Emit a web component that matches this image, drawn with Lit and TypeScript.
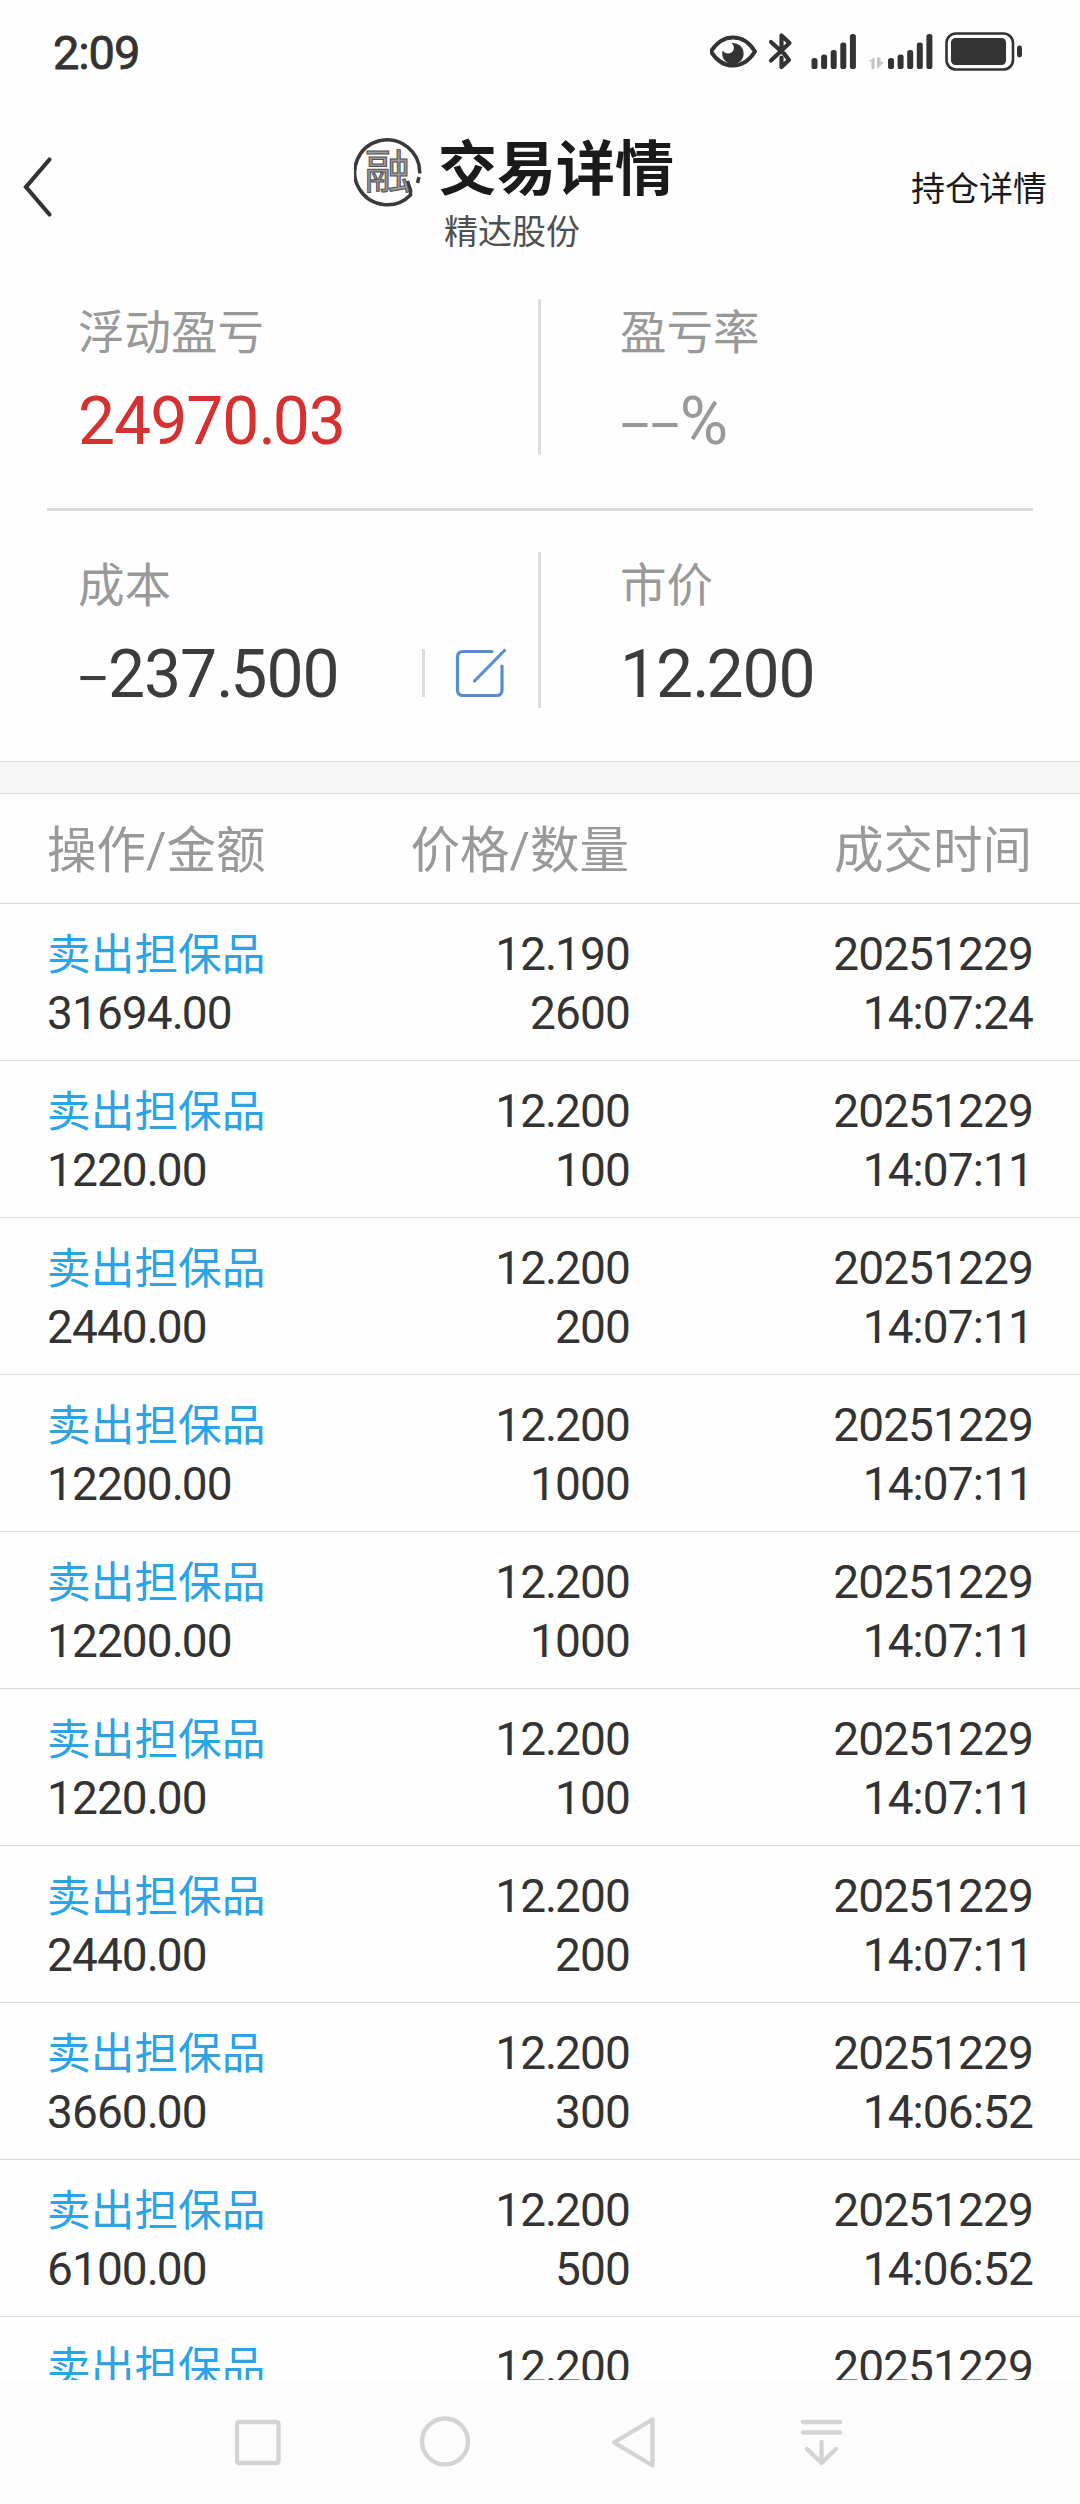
import { LitElement, html, css, svg } from "lit";
import { customElement } from "lit/decorators.js";

interface Trade {
  amount: string;
  price: string;
  qty: string;
  time: string;
}

const t = (amount: string, price: string, qty: string, time: string): Trade => ({ amount, price, qty, time });

const TRADES: Trade[] = [
  t("31694.00", "12.190", "2600", "14:07:24"),
  t("1220.00", "12.200", "100", "14:07:11"),
  t("2440.00", "12.200", "200", "14:07:11"),
  t("12200.00", "12.200", "1000", "14:07:11"),
  t("12200.00", "12.200", "1000", "14:07:11"),
  t("1220.00", "12.200", "100", "14:07:11"),
  t("2440.00", "12.200", "200", "14:07:11"),
  t("3660.00", "12.200", "300", "14:06:52"),
  t("6100.00", "12.200", "500", "14:06:52"),
  t("", "12.200", "", ""),
];

// Sets the decimal point slightly tighter than the digits.
const decimal = (value: string) => {
  const [whole, frac] = value.split(".");
  return frac === undefined ? value : html`${whole}<span class="point">.</span>${frac}`;
};

@customElement("status-bar")
class StatusBar extends LitElement {
  static styles = css`
    :host { display: flex; height: 104px; justify-content: space-between; box-sizing: border-box; padding-left: 53px; }
    .clock { font-size: 47px; line-height: 55px; letter-spacing: -1.100px; color: #333; -webkit-text-stroke: 0.800px #333; padding-top: 25px; }
    .icons { display: block; }
  `;
  private bars(x: number) {
    return [[0, 58], [9.6, 54.5], [19.2, 50], [28.8, 42.5], [38.4, 34]].map(
      ([dx, y]) => svg`<rect x=${x + dx} y=${y} width="6" height=${69 - y} rx="2.6" fill="#333"/>`
    );
  }
  render() {
    return html`
      <div class="clock">2:09</div>
      <svg class="icons" width="370" height="104" viewBox="710 0 370 104" fill="none">
        <path d="M711 51.500C716 43.500 723 37.500 733 37.500S750 43.500 755 51.500C750 59.500 743 65.500 733 65.500S716 59.500 711 51.500Z" stroke="#333" stroke-width="4" stroke-linejoin="round"/>
        <path d="M731.500 43A10.700 10.700 0 1 1 722.700 50.500C724.500 53.500 728.500 54.500 731.500 52.500C735 50 734.500 45.500 731.500 43Z" fill="#333"/>
        <path d="M771 42L782.500 52.500M771 60.500L789.500 43L781.500 35.500V51M784 53.500L789 60L781.500 67V57.500" stroke="#333" stroke-width="4.200" stroke-linejoin="round" stroke-linecap="round"/>
        ${this.bars(811.5)}
        <path d="M868.500 61.500L874.500 57V69H871.500V61.500ZM877 57.500H880.500V62H884L877 69Z" fill="#c4c4c4"/>
        ${this.bars(888)}
        <rect x="946.500" y="33.500" width="66.500" height="36" rx="9.500" stroke="#333" stroke-width="2.600"/>
        <rect x="951" y="38" width="55" height="27" rx="4.500" fill="#333"/>
        <rect x="1017" y="45.500" width="5" height="12" rx="2.400" fill="#333"/>
      </svg>
    `;
  }
}

@customElement("page-header")
class PageHeader extends LitElement {
  static styles = css`
    :host { display: grid; grid-template-columns: 354px 1fr 370px; height: 182px; box-sizing: border-box; }
    .back { display: block; margin: 52px 0 0 20px; }
    .middle { display: flex; gap: 15px; }
    .seal { display: block; margin-top: 33px; flex: none; }
    .seal-text { font-family: "Noto Sans CJK SC", sans-serif; font-size: 46px; }
    .titles { display: flex; flex-direction: column; width: 240px; }
    .title { font-size: 59px; line-height: 70px; font-weight: 700; color: #1a1a1a; margin-top: 31px; white-space: nowrap; }
    .sub { font-size: 34px; line-height: 44px; color: #505050; margin-top: 5px; padding-left: 6px; white-space: nowrap; }
    .link { font-size: 34px; line-height: 44px; color: #1a1a1a; text-align: right; padding: 63px 33px 0 0; }
  `;
  render() {
    return html`
      <svg class="back" width="34" height="62" viewBox="20 156 34 62" fill="none">
        <path d="M49.500 159.500L26 187L49.500 214.500" stroke="#333" stroke-width="4.200" stroke-linecap="round"/>
      </svg>
      <div class="middle">
        <svg class="seal" width="69" height="70" viewBox="353 137 69 70" fill="none">
          <path d="M418.700 173.500A32.500 32.500 0 1 0 409.500 195V190L406.500 181M418 177L416.500 183" stroke="#3a3a3a" stroke-width="3.500"/>
          <text class="seal-text" x="363.500" y="188" fill="#9a9a9a" stroke="#505050" stroke-width="1">融</text>
        </svg>
        <div class="titles">
          <div class="title">交易详情</div>
          <div class="sub">精达股份</div>
        </div>
      </div>
      <div class="link">持仓详情</div>
    `;
  }
}

@customElement("position-summary")
class PositionSummary extends LitElement {
  static styles = css`
    :host { display: block; height: 475px; }
    .row { display: grid; grid-template-columns: 538px 3px 1fr; height: 222px; box-sizing: border-box; padding-top: 13px; }
    .row.second { height: 253px; padding-top: 41px; }
    .cell { padding-left: 78px; display: flex; flex-direction: column; }
    .right { padding-left: 79px; }
    .label { font-size: 46.500px; line-height: 60px; color: #999; margin-top: 4px; }
    .value { font-size: 66px; line-height: 78px; height: 78px; letter-spacing: -1px; color: #3c3c3c; margin-top: 20px; white-space: nowrap; }
    .value.red { color: #d63030; }
    .value.grey { color: #999; }
    .point { letter-spacing: -3.200px; }
    .dash { display: inline-block; font-family: Inter, sans-serif; line-height: 0; letter-spacing: 0; font-weight: 300; transform: translateY(1.500px) scaleX(1.250); }
    .bar { background: #dcdcdc; height: 156px; }
    .rule { height: 3px; background: #dcdcdc; margin: 0 47px; }
    .line { display: flex; align-items: flex-start; justify-content: space-between; padding-right: 30px; }
    .tools { display: flex; gap: 29px; align-items: center; margin-top: 31px; }
    .tick { width: 3px; height: 48px; background: #dcdcdc; }
    .edit { display: block; }
  `;
  render() {
    return html`
      <div class="row">
        <div class="cell"><div class="label">浮动盈亏</div><div class="value red">${decimal("24970.03")}</div></div>
        <div class="bar"></div>
        <div class="cell right"><div class="label">盈亏率</div><div class="value grey"><span class="dash">-</span><span class="dash">-</span>%</div></div>
      </div>
      <div class="rule"></div>
      <div class="row second">
        <div class="cell">
          <div class="label">成本</div>
          <div class="line">
            <div class="value"><span class="dash">-</span>${decimal("237.500")}</div>
            <div class="tools">
              <div class="tick"></div>
              <svg class="edit" width="54" height="52" viewBox="454 646 54 52" fill="none" stroke="#558fd0" stroke-width="3.200" stroke-linecap="round">
                <path d="M492 650.500H463Q457.500 650.500 457.500 656V689Q457.500 694.500 463 694.500H496.500Q502 694.500 502 689V665M474.500 680L504.500 649.500"/>
              </svg>
            </div>
          </div>
        </div>
        <div class="bar"></div>
        <div class="cell right"><div class="label">市价</div><div class="value">${decimal("12.200")}</div></div>
      </div>
    `;
  }
}

@customElement("trade-table")
class TradeTable extends LitElement {
  static styles = css`
    :host { display: block; height: 1619px; overflow: hidden; }
    .band { height: 31px; background: #f6f6f6; border-top: 1px solid #dadada; border-bottom: 1px solid #dadada; }
    .head, .row { display: grid; grid-template-columns: 290px 292px 1fr; padding: 0 48px 0 47px; box-sizing: border-box; border-bottom: 1px solid #dadada; white-space: nowrap; }
    .head { height: 110px; font-size: 49.500px; line-height: 114px; color: #999; }
    .row { height: 157px; font-size: 46px; line-height: 59px; letter-spacing: -0.900px; color: #333; padding-top: 21px; }
    .r { text-align: right; }
    .point { letter-spacing: -2.200px; }
    .op { font-size: 43.700px; letter-spacing: 0; color: #2ba3e4; height: 58px; padding-top: 1px; }
    .row .r { margin-right: -0.900px; }
  `;
  render() {
    return html`
      <div class="band"></div>
      <div class="head"><div>操作/金额</div><div class="r">价格/数量</div><div class="r">成交时间</div></div>
      ${TRADES.map((d) => html`
        <div class="row">
          <div><div class="op">卖出担保品</div><div>${decimal(d.amount)}</div></div>
          <div class="r"><div>${decimal(d.price)}</div><div>${d.qty}</div></div>
          <div class="r"><div>20251229</div><div>${d.time}</div></div>
        </div>`)}
    `;
  }
}

@customElement("system-nav")
class SystemNav extends LitElement {
  static styles = css`
    :host { display: block; height: 124px; background: #fcfcfc; }
    .nav { display: block; }
  `;
  render() {
    return html`
      <svg class="nav" width="1080" height="124" viewBox="0 2380 1080 124" fill="none" stroke="#d3d3d3" stroke-width="4.300" stroke-linejoin="round" stroke-linecap="round">
        <rect x="237" y="2422" width="41.500" height="41" rx="2"/>
        <circle cx="445" cy="2441.500" r="23"/>
        <path d="M652.500 2419.500V2465.500L614 2442.500Z"/>
        <path d="M803 2422H840M803 2432.500H840M821.500 2442V2462M807 2449L821.500 2463L836 2449"/>
      </svg>
    `;
  }
}

@customElement("app-root")
class AppRoot extends LitElement {
  static styles = css`
    :host { display: flex; flex-direction: column; width: 1080px; height: 2504px; overflow: hidden; background: #fefefe; font-family: Roboto, "Noto Sans CJK SC", sans-serif; }
  `;
  render() {
    return html`
      <status-bar></status-bar>
      <page-header></page-header>
      <position-summary></position-summary>
      <trade-table></trade-table>
      <system-nav></system-nav>
    `;
  }
}
